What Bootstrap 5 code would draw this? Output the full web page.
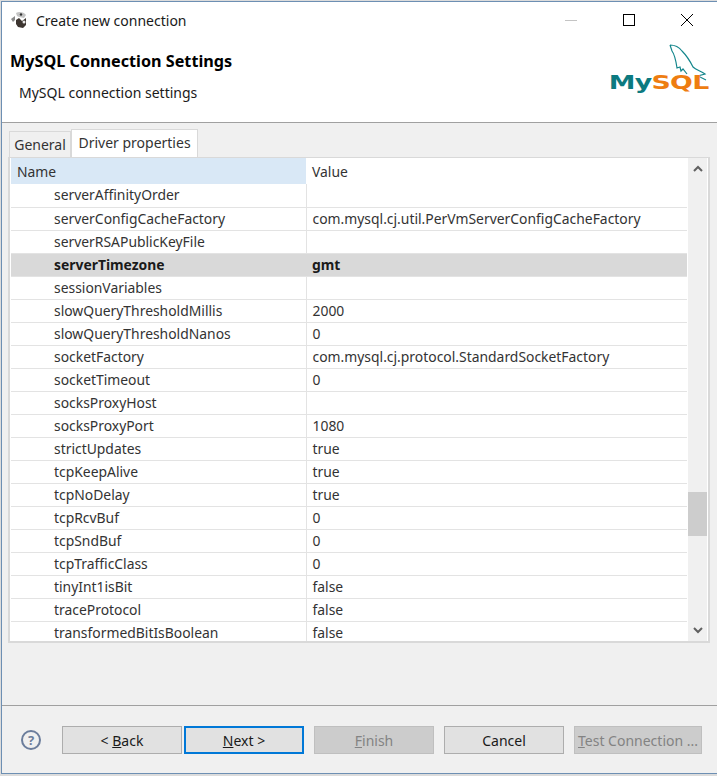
<!DOCTYPE html>
<html lang="en">
<head>
    <meta charset="UTF-8">
    <title>Create new connection</title>
    <link href="https://cdn.jsdelivr.net/npm/bootstrap@5.3.2/dist/css/bootstrap.min.css" rel="stylesheet">
    <style>
        body {
            background-color: #dcdcdc;
            font-family: "Noto Sans", "Open Sans", sans-serif;
            font-size: 14px;
            color: #1a1a1a;
            overflow: hidden;
        }
        .dlg-window {
            width: 716px;
            height: 773px;
            margin: 1px 0 0 1px;
            border-top: 1px solid #6d8fb3;
            border-left: 1px solid #6d8fb3;
            border-bottom: 1px solid #6d8fb3;
            background-color: #f0f0f0;
        }
        .dlg-title {
            height: 36px;
            background-color: #fff;
            padding: 0 1px 0 8px;
        }
        .dlg-title-text { margin-left: 8px; font-size: 14px; }
        .win-btn { width: 58px; height: 36px; }
        .dlg-head {
            height: 84px;
            background-color: #fff;
            border-bottom: 1px solid #a0a0a0;
            box-sizing: content-box;
        }
        .dlg-heading { font-size: 16.2px; font-weight: 700; color: #000; margin: 12px 0 0 8px; line-height: 22px; }
        .dlg-sub { margin: 11px 0 0 17px; line-height: 20px; }
        .logo-box { width: 100px; margin-right: 8px; }
        .logo-dolphin { margin: 5px 1px 0 0; }
        .logo-text {
            font-family: "DejaVu Sans", sans-serif;
            font-weight: 700;
            font-size: 20px;
            line-height: 20px;
            margin-top: -11px;
            letter-spacing: -.5px;
            white-space: nowrap;
            transform: scaleX(1.34);
            transform-origin: right center;
        }
        .logo-my { color: #0c7a80; }
        .logo-sql { color: #ee7d11; }
        .tab-area { padding: 6px 8px 0 6px; height: 521px; }
        .nav-tabs.dlg-tabs { border-bottom: 0; height: 28px; align-items: flex-end; padding-left: 1px; }
        .dlg-tabs .nav-link {
            color: #333;
            background-color: #f0f0f0;
            border: 1px solid #d9d9d9;
            border-bottom: 0;
            border-radius: 0;
            padding: 0;
            width: 62px;
            text-align: center;
            height: 26px;
            line-height: 26px;
            margin: 0;
        }
        .dlg-tabs .nav-link.active { width: 127px; height: 28px; background-color: #fff; color: #333; border-color: #d9d9d9; }
        .prop-panel {
            height: 486px;
            border: 2px solid #d9d9d9;
            border-top-width: 1px;
            background-color: #fff;
            padding: 0 1px 0 1px;
            margin-right: -1px;
        }
        .prop-grid { width: 676px; overflow: hidden; height: 483px; }
        .prop-grid .table { width: 676px; table-layout: fixed; margin: 0; --bs-table-bg: transparent; color: #333; }
        .prop-grid th, .prop-grid td {
            height: 23px;
            padding: 0;
            border: 0;
            border-bottom: 1px solid #e3e3e3;
            line-height: 22px;
            font-size: 13.9px;
            white-space: nowrap;
            overflow: hidden;
            font-weight: 400;
            box-shadow: none;
        }
        .prop-grid td:first-child { padding-left: 43px; border-right: 1px solid #e3e3e3; }
        .prop-grid td:last-child { padding-left: 6px; }
        .prop-grid thead th { height: 26px; line-height: 24px; padding-top: 2px; border-bottom: 0; }
        .prop-grid thead th:first-child { background-color: #d9e8f6; padding-left: 6px; width: 295px; }
        .prop-grid thead th:last-child { padding-left: 6px; }
        .prop-grid tr.row-mod td { background-color: #d9d9d9; font-weight: 700; color: #1a1a1a; border-right: 0; }
        .scroll-col { width: 19px; margin-left: 1px; background-color: #f0f0f0; height: 483px; }
        .scroll-arrow { height: 21px; }
        .scroll-track { height: 441px; padding-top: 313px; }
        .scroll-thumb { height: 44px; background-color: #cdcdcd; }
        .dlg-sep { border-bottom: 1px solid #a0a0a0; height: 62px; }
        .dlg-foot { padding: 20px 15px 0 19px; }
        .help-mark {
            width: 20px;
            height: 20px;
            border: 2px solid #6b7d9c;
            border-radius: 50%;
            color: #6b7d9c;
            font-weight: 700;
            font-size: 13px;
            line-height: 16px;
            text-align: center;
            margin-right: 21px;
        }
        .dlg-btn {
            width: 120px;
            height: 28px;
            padding: 1px 0 0;
            font-size: 14px;
            line-height: 25px;
            color: #1a1a1a;
            background-color: #e1e1e1;
            border: 1px solid #adadad;
            border-radius: 0;
        }
        .dlg-btn:hover { background-color: #e1e1e1; }
        .dlg-btn.btn-next { border: 2px solid #0078d7; line-height: 23px; margin-left: 2px; }
        .dlg-btn.btn-off, .dlg-btn.btn-off:disabled {
            background-color: #ccc;
            border: 1px solid #bfbfbf;
            color: #838383;
            opacity: 1;
        }
        .btn-test { width: 128px; white-space: nowrap; }
        .gap-left { margin-left: 10px; }
    </style>
</head>
<body>
    <div class="dlg-window d-flex flex-column">
        <div class="dlg-title d-flex align-items-center">
            <svg width="18" height="18" viewBox="0 0 18 18">
                <path d="M1 8 L5 5 L5 9 L3 11Z" fill="#8a8a8a"/>
                <path d="M6 2 C9 0 14 1 16 4 L14 7 L9 6 L7 5Z" fill="#c4c4c4"/>
                <path d="M6 9 L9 7 L12 10 L16 7 L16 14 L13 17 L8 16 L6 13Z" fill="#3d3530"/>
                <circle cx="11" cy="3.5" r="1.2" fill="#333"/>
                <circle cx="14" cy="11" r="1.5" fill="#e8e8e8"/>
            </svg>
            <span class="dlg-title-text flex-grow-1">Create new connection</span>
            <div class="win-btn d-flex align-items-center justify-content-center">
                <svg width="14" height="14"><path d="M1 7.5H13" stroke="#c4c4c4"/></svg>
            </div>
            <div class="win-btn d-flex align-items-center justify-content-center">
                <svg width="14" height="14"><rect x="1.5" y="1.5" width="11" height="11" fill="none" stroke="#000"/></svg>
            </div>
            <div class="win-btn d-flex align-items-center justify-content-center">
                <svg width="14" height="14"><path d="M1 1L13 13M13 1L1 13" stroke="#000"/></svg>
            </div>
        </div>

        <div class="dlg-head d-flex justify-content-between">
            <div>
                <div class="dlg-heading">MySQL Connection Settings</div>
                <div class="dlg-sub">MySQL connection settings</div>
            </div>
            <div class="logo-box d-flex flex-column align-items-end">
                <svg width="40" height="40" viewBox="0 0 40 40" class="logo-dolphin">
                    <path d="M2 2 C7 2 11 4 14 8 C19 13 22 18 25 24 C28 27 33 28 37 31 L30 33 L38 37 M2 2 L4 8 C7 12 8 18 9 25 L12 24 L13 28 L15 26 L19 31" fill="none" stroke="#14868c" stroke-width="1.2"/>
                </svg>
                <div class="logo-text"><span class="logo-my">My</span><span class="logo-sql">SQL</span></div>
            </div>
        </div>

        <div class="tab-area">
            <ul class="nav nav-tabs dlg-tabs">
                <li class="nav-item"><a class="nav-link" href="#">General</a></li>
                <li class="nav-item"><a class="nav-link active" href="#">Driver properties</a></li>
            </ul>
            <div class="prop-panel d-flex">
                <div class="prop-grid">
                    <table class="table">
                        <thead>
                            <tr><th>Name</th><th>Value</th></tr>
                        </thead>
                        <tbody>
                            <tr><td>serverAffinityOrder</td><td></td></tr>
                            <tr><td>serverConfigCacheFactory</td><td>com.mysql.cj.util.PerVmServerConfigCacheFactory</td></tr>
                            <tr><td>serverRSAPublicKeyFile</td><td></td></tr>
                            <tr class="row-mod"><td>serverTimezone</td><td>gmt</td></tr>
                            <tr><td>sessionVariables</td><td></td></tr>
                            <tr><td>slowQueryThresholdMillis</td><td>2000</td></tr>
                            <tr><td>slowQueryThresholdNanos</td><td>0</td></tr>
                            <tr><td>socketFactory</td><td>com.mysql.cj.protocol.StandardSocketFactory</td></tr>
                            <tr><td>socketTimeout</td><td>0</td></tr>
                            <tr><td>socksProxyHost</td><td></td></tr>
                            <tr><td>socksProxyPort</td><td>1080</td></tr>
                            <tr><td>strictUpdates</td><td>true</td></tr>
                            <tr><td>tcpKeepAlive</td><td>true</td></tr>
                            <tr><td>tcpNoDelay</td><td>true</td></tr>
                            <tr><td>tcpRcvBuf</td><td>0</td></tr>
                            <tr><td>tcpSndBuf</td><td>0</td></tr>
                            <tr><td>tcpTrafficClass</td><td>0</td></tr>
                            <tr><td>tinyInt1isBit</td><td>false</td></tr>
                            <tr><td>traceProtocol</td><td>false</td></tr>
                            <tr><td>transformedBitIsBoolean</td><td>false</td></tr>
                        </tbody>
                    </table>
                </div>
                <div class="scroll-col">
                    <div class="scroll-arrow d-flex align-items-center justify-content-center">
                        <svg width="10" height="7"><path d="M1 6L5 2L9 6" fill="none" stroke="#606060" stroke-width="2"/></svg>
                    </div>
                    <div class="scroll-track"><div class="scroll-thumb"></div></div>
                    <div class="scroll-arrow d-flex align-items-center justify-content-center">
                        <svg width="10" height="7"><path d="M1 1L5 5L9 1" fill="none" stroke="#606060" stroke-width="2"/></svg>
                    </div>
                </div>
            </div>
        </div>

        <div class="dlg-sep"></div>

        <div class="dlg-foot d-flex align-items-start">
            <div class="help-mark mt-1">?</div>
            <button class="btn dlg-btn">&lt; <u>B</u>ack</button>
            <button class="btn dlg-btn btn-next">
                <u>N</u>ext &gt;
            </button>
            <button class="btn dlg-btn btn-off gap-left" disabled><u>F</u>inish</button>
            <button class="btn dlg-btn gap-left">Cancel</button>
            <button class="btn dlg-btn btn-off btn-test gap-left" disabled><u>T</u>est Connection ...</button>
        </div>
    </div>
    <script src="https://cdn.jsdelivr.net/npm/bootstrap@5.3.2/dist/js/bootstrap.bundle.min.js"></script>
</body>
</html>
